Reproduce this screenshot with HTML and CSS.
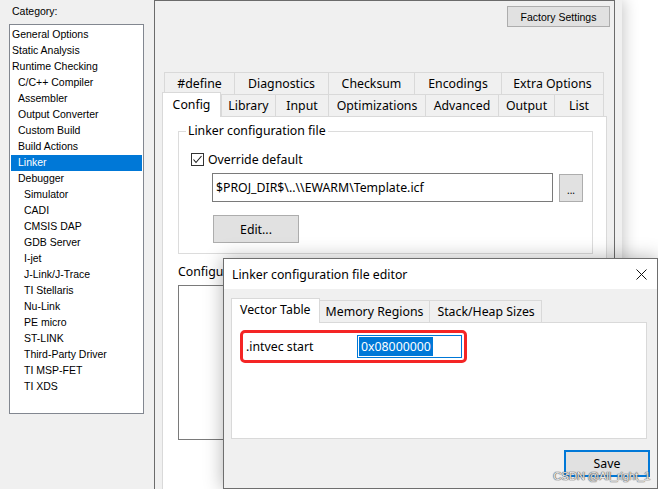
FILE: index.html
```html
<!DOCTYPE html>
<html lang="en">
<head>
<meta charset="utf-8">
<title>Options - Linker</title>
<link rel="stylesheet" href="styles.css">
</head>
<body>
<div class="app">
  <aside class="sidebar">
    <div class="cat-label">Category:</div>
    <ul class="cat-list">
      <li class="l0">General Options</li>
      <li class="l0">Static Analysis</li>
      <li class="l0">Runtime Checking</li>
      <li class="l1">C/C++ Compiler</li>
      <li class="l1">Assembler</li>
      <li class="l1">Output Converter</li>
      <li class="l1">Custom Build</li>
      <li class="l1">Build Actions</li>
      <li class="l1 selected">Linker</li>
      <li class="l1">Debugger</li>
      <li class="l2">Simulator</li>
      <li class="l2">CADI</li>
      <li class="l2">CMSIS DAP</li>
      <li class="l2">GDB Server</li>
      <li class="l2">I-jet</li>
      <li class="l2">J-Link/J-Trace</li>
      <li class="l2">TI Stellaris</li>
      <li class="l2">Nu-Link</li>
      <li class="l2">PE micro</li>
      <li class="l2">ST-LINK</li>
      <li class="l2">Third-Party Driver</li>
      <li class="l2">TI MSP-FET</li>
      <li class="l2">TI XDS</li>
    </ul>
  </aside>

  <section class="frame">
    <div class="toolbar">
      <button class="btn factory">Factory Settings</button>
    </div>
    <div class="tabs">
      <div class="tabrow back">
        <div class="tab t-define">#define</div>
        <div class="tab t-diag">Diagnostics</div>
        <div class="tab t-check">Checksum</div>
        <div class="tab t-enc">Encodings</div>
        <div class="tab t-extra last">Extra Options</div>
      </div>
      <div class="tabrow front">
        <div class="tab t-config active">Config</div>
        <div class="tab t-lib">Library</div>
        <div class="tab t-input">Input</div>
        <div class="tab t-opt">Optimizations</div>
        <div class="tab t-adv">Advanced</div>
        <div class="tab t-out">Output</div>
        <div class="tab t-list last">List</div>
      </div>
      <div class="tabpanel">
        <fieldset class="group">
          <legend>Linker configuration file</legend>
          <div class="check">
            <span class="box"><svg width="11" height="11" viewBox="0 0 11 11"><polyline points="1.5,5.5 4,8.5 9.5,2" fill="none" stroke="#1a1a1a" stroke-width="1.1"/></svg></span>
            <span>Override default</span>
          </div>
          <div class="pathrow">
            <div class="path">$PROJ_DIR$\..\\EWARM\Template.icf</div>
            <button class="btn dots">...</button>
          </div>
          <button class="btn edit">Edit...</button>
        </fieldset>
        <div class="cfg-label">Configuration file symbol definitions: (one per line)</div>
        <div class="cfg-box"></div>
      </div>
    </div>
  </section>
</div>

<div class="dialog">
  <div class="dlg-title">
    <span>Linker configuration file editor</span>
    <svg class="close" width="11" height="11" viewBox="0 0 11 11"><path d="M0.5 0.5 L10.5 10.5 M10.5 0.5 L0.5 10.5" stroke="#111" stroke-width="1" fill="none"/></svg>
  </div>
  <div class="dlg-body">
    <div class="dtabrow">
      <div class="dtab active">Vector Table</div>
      <div class="dtab">Memory Regions</div>
      <div class="dtab last">Stack/Heap Sizes</div>
    </div>
    <div class="dpanel">
      <div class="mark">
        <span class="field-label">.intvec start</span>
        <div class="hexinput"><span class="sel">0x08000000</span></div>
      </div>
    </div>
    <div class="dlg-foot">
      <button class="btn save">Save</button>
    </div>
  </div>
</div>

<div class="watermark">CSDN @All_right_1</div>
</body>
</html>
```

FILE: styles.css
```css
* { box-sizing: border-box; }

html, body {
  margin: 0;
  padding: 0;
}

body {
  width: 658px;
  height: 489px;
  overflow: hidden;
  position: relative;
  background: #fff;
  color: #000;
  font-family: "Noto Sans", sans-serif;
  font-size: 12.3px;
}

.app {
  display: flex;
  width: 622px;
  height: 489px;
  background: #f0f0f0;
  box-shadow: 2px 0 14px rgba(0, 0, 0, 0.22);
}

/* ---------- category sidebar ---------- */
.sidebar {
  width: 154px;
  flex: none;
  padding: 3px 0 0 9px;
  font-family: "Liberation Sans", Arial, sans-serif;
  font-size: 10.5px;
}

.cat-label {
  height: 21px;
  line-height: 16px;
  padding-left: 3px;
}

.cat-list {
  list-style: none;
  margin: 0;
  padding: 2px 1px;
  width: 135px;
  height: 390px;
  border: 1px solid #828790;
  background: #fff;
}

.cat-list li {
  height: 16px;
  line-height: 15px;
  white-space: nowrap;
}

.cat-list .l0 { padding-left: 1px; }
.cat-list .l1 { padding-left: 7px; }
.cat-list .l2 { padding-left: 13px; }

.cat-list .selected {
  background: #0078d7;
  color: #fff;
}

/* ---------- main options frame ---------- */
.frame {
  width: 461px;
  flex: none;
  display: flex;
  flex-direction: column;
  border: 1px solid #6b6b6b;
  border-bottom: none;
}

.toolbar {
  display: flex;
  justify-content: flex-end;
  padding: 5px 4px 0 0;
}

.btn {
  font: inherit;
  color: #000;
  background: #e1e1e1;
  border: 1px solid #adadad;
  margin: 0;
  padding: 0;
}

.factory {
  width: 103px;
  height: 21px;
  font-family: "Liberation Sans", Arial, sans-serif;
  font-size: 10.5px;
}

.tabs {
  width: 445px;
  flex: 1;
  display: flex;
  flex-direction: column;
  margin: 45px 0 0 7px;
}

.tabrow {
  display: flex;
  height: 22px;
  margin-left: 2px;
}

.tab {
  flex: none;
  height: 22px;
  line-height: 21px;
  text-align: center;
  white-space: nowrap;
  background: #f0f0f0;
  border-top: 1px solid #d9d9d9;
  border-left: 1px solid #d9d9d9;
}

.tab.last { border-right: 1px solid #d9d9d9; }

.t-define { width: 70px; }
.t-diag   { width: 94px; }
.t-check  { width: 86px; }
.t-enc    { width: 87px; }
.t-extra  { width: 103px; }

.t-config { width: 59px; }
.t-lib    { width: 54px; }
.t-input  { width: 53px; }
.t-opt    { width: 97px; }
.t-adv    { width: 73px; }
.t-out    { width: 56px; }
.t-list   { width: 50px; }

.front .tab.active {
  position: relative;
  z-index: 1;
  height: 25px;
  margin: -2px 0 0 -2px;
  line-height: 23px;
  background: #fff;
  border-right: 1px solid #d9d9d9;
}

.tabpanel {
  flex: 1;
  background: #fff;
  border: 1px solid #d9d9d9;
  border-bottom: none;
  padding: 0 13px 0 15px;
}

.group {
  width: 415px;
  margin: 6px 0 0;
  padding: 0 0 10px 12px;
  border: 1px solid #dcdcdc;
}

.group legend {
  margin-left: -5px;
  padding: 0 2px;
  line-height: 16px;
}

.check {
  display: flex;
  align-items: center;
  height: 16px;
  margin-top: 12px;
}

.box {
  width: 13px;
  height: 13px;
  border: 1px solid #333;
  background: #fff;
  display: flex;
  align-items: center;
  justify-content: center;
  margin-right: 4px;
}

.pathrow {
  display: flex;
  align-items: flex-start;
  margin-top: 6px;
}

.path {
  width: 341px;
  height: 29px;
  margin-left: 21px;
  padding-left: 3px;
  line-height: 27px;
  background: #fff;
  border: 1px solid #7a7a7a;
  white-space: nowrap;
}

.dots {
  width: 24px;
  height: 28px;
  margin: 1px 0 0 6px;
  font-size: 10px;
  line-height: 1;
  padding-top: 3px;
}

.edit {
  display: block;
  width: 86px;
  height: 28px;
  margin: 13px 0 0 22px;
}

.cfg-label {
  margin-top: 10px;
  line-height: 16px;
  white-space: nowrap;
}

.cfg-box {
  width: 415px;
  height: 155px;
  margin-top: 5px;
  border: 1px solid #7a7a7a;
}

/* ---------- editor dialog (floating window) ---------- */
.dialog {
  position: absolute;
  left: 223px;
  top: 258px;
  width: 435px;
  height: 231px;
  display: flex;
  flex-direction: column;
  background: #f0f0f0;
  border: 1px solid #6e6e6e;
  box-shadow: 0 0 18px rgba(0, 0, 0, 0.3);
}

.dlg-title {
  height: 30px;
  flex: none;
  display: flex;
  align-items: center;
  justify-content: space-between;
  padding: 0 10px 0 8px;
  background: #fff;
}

.dlg-body {
  flex: 1;
  padding: 9px 0 0 7px;
}

.dtabrow {
  display: flex;
  align-items: flex-end;
  height: 24px;
}

.dtab {
  height: 22px;
  line-height: 21px;
  padding: 0 6px 0 7px;
  white-space: nowrap;
  background: #f0f0f0;
  border-top: 1px solid #d9d9d9;
  border-left: 1px solid #d9d9d9;
}

.dtab.last { border-right: 1px solid #d9d9d9; }

.dtab.active {
  position: relative;
  z-index: 1;
  height: 25px;
  margin: 0 -2px -1px 0;
  padding: 0 8px;
  line-height: 22px;
  background: #fff;
  border-right: 1px solid #d9d9d9;
}

.dpanel {
  width: 416px;
  height: 117px;
  padding: 7px 0 0 8px;
  background: #fff;
  border: 1px solid #d9d9d9;
}

.mark {
  display: flex;
  align-items: center;
  width: 227px;
  height: 33px;
  padding: 0 2px 0 3px;
  border: 3px solid #f42525;
  border-radius: 5px;
}

.field-label {
  flex: 1;
  white-space: nowrap;
}

.hexinput {
  width: 105px;
  height: 23px;
  padding: 1px;
  background: #fff;
  border: 1px solid #0078d7;
}

.sel {
  display: inline-block;
  line-height: 19px;
  padding: 0 2px;
  background: #0078d7;
  color: #fff;
}

.dlg-foot {
  display: flex;
  justify-content: flex-end;
  padding: 11px 7px 0 0;
}

.save {
  width: 86px;
  height: 27px;
  border: 2px solid #0078d7;
}

/* ---------- watermark ---------- */
.watermark {
  position: absolute;
  right: 8px;
  bottom: 6px;
  line-height: 14px;
  font-family: "Liberation Sans", Arial, sans-serif;
  font-size: 11.5px;
  letter-spacing: -0.3px;
  color: rgba(252, 252, 252, 0.9);
  text-shadow: 0 0 1px #555, 0 0 1px #555, 0 0 1px #777;
}
```
